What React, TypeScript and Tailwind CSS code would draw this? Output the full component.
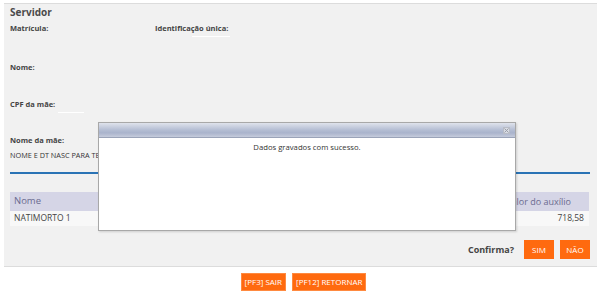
import React from "react";

export default function App() {
  const font = { fontFamily: '"Open Sans", "Noto Sans", sans-serif' };
  return (
    <div className="relative w-[601px] h-[304px] bg-white overflow-hidden" style={font}>
      <div className="mt-[3px] ml-[4px] w-[593px] h-[264px] bg-[#f1f1f1] border-t border-b border-[#dcdcdc] flex flex-col">
        <div className="px-[6px] flex flex-col">
          <div className="h-[16px] leading-[16px] text-[10px] font-bold text-[#4a4a4a]">Servidor</div>
          <div className="flex h-[18px] items-center">
            <div className="w-[145px] text-[7.5px] font-bold text-[#444]">Matrícula:</div>
            <div className="text-[7.5px] font-bold text-[#444] relative">
              Identificação única:
              <div className="absolute left-[37px] top-[13px] w-[38px] h-[1px] bg-white" />
            </div>
          </div>
          <div className="h-[21px]" />
          <div className="h-[18px] flex items-center text-[7.5px] font-bold text-[#444]">Nome:</div>
          <div className="h-[19px]" />
          <div className="h-[18px] flex items-center text-[7.5px] font-bold text-[#444] relative">
            CPF da mãe:
            <div className="absolute left-[48px] top-[16px] w-[26px] h-[1px] bg-white" />
          </div>
          <div className="h-[19px]" />
          <div className="h-[15px] flex items-center text-[7.5px] font-bold text-[#444]">Nome da mãe:</div>
          <div className="h-[15px] flex items-center text-[7.3px] text-[#333]">NOME E DT NASC PARA TESTE</div>
          <div className="mt-[9px] w-[580px] h-[2px] bg-[#2a73b5]" />
          <div className="h-[18px]" />
          <div className="w-[579px] flex flex-col">
            <div className="h-[19px] bg-[#d5d5e6] flex items-center justify-between pl-[4px] pr-[18px] text-[9px] text-[#6b6b90]">
              <span className="text-[9.5px]">Nome</span>
              <span>Valor do auxílio</span>
            </div>
            <div className="h-[15px] bg-[#f8f8f8] flex items-center justify-between pl-[4px] pr-[5px] text-[8.5px] text-[#444]">
              <span>NATIMORTO 1</span>
              <span>718,58</span>
            </div>
          </div>
          <div className="mt-[14px] w-[580px] flex items-center justify-end gap-[6px]">
            <span className="text-[9px] font-bold text-[#444] mr-[4px]">Confirma?</span>
            <button className="w-[30px] h-[19px] bg-[#ff6a0f] text-white text-[8px]">SIM</button>
            <button className="w-[30px] h-[19px] bg-[#ff6a0f] text-white text-[8px]">NÃO</button>
          </div>
        </div>
      </div>
      <div className="mt-[6px] flex justify-center gap-[6px] pl-[6px]">
        <button className="h-[18px] px-[3px] bg-[#ff6a0f] text-white text-[8px] border border-[#ff8a40]">[PF3] SAIR</button>
        <button className="h-[18px] px-[3px] bg-[#ff6a0f] text-white text-[8px] border border-[#ff8a40]">[PF12] RETORNAR</button>
      </div>

      <div className="absolute left-[98px] top-[122px] w-[418px] h-[109px] bg-white border border-[#a8a8a8] shadow-[1px_1px_2px_rgba(0,0,0,0.15)] flex flex-col">
        <div className="h-[15px] bg-[linear-gradient(#dfe3ec,#b4bdd3_50%,#a9b3cc_70%,#c5cbdb)] border-b border-[#9aa3b8] flex items-center justify-end pr-[5px]">
          <svg width="7" height="7" viewBox="0 0 7 7">
            <rect x="0.5" y="0.5" width="6" height="6" fill="#d8dbe3" stroke="#b8bcc6" />
            <path d="M1.5 1.5 L5.5 5.5 M5.5 1.5 L1.5 5.5" stroke="#9a9ea8" strokeWidth="1" />
          </svg>
        </div>
        <div className="pt-[4px] text-center text-[7.7px] text-[#333]">Dados gravados com sucesso.</div>
      </div>
    </div>
  );
}
